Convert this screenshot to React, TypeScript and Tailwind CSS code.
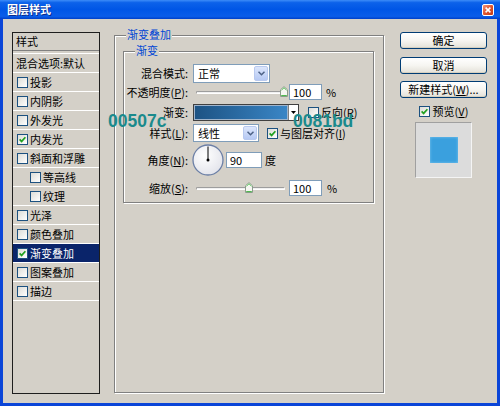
import React from "react";

function Check({ checked }: { checked?: boolean }) {
  return (
    <span className="inline-flex w-[11px] h-[11px] shrink-0 items-center justify-center border border-[#1c5180] bg-linear-to-br from-[#dcdcd7] to-white">
      {checked && (
        <svg width="7" height="7" viewBox="0 0 7 7">
          <path d="M0.6 3.4 L2.6 5.4 L6.4 1.2" stroke="#21a121" strokeWidth="1.7" fill="none" />
        </svg>
      )}
    </span>
  );
}

function Thumb() {
  return (
    <svg width="8" height="11" viewBox="0 0 8 11">
      <path d="M0.5 10.5 V3.8 L4 0.6 L7.5 3.8 V10.5 Z" fill="#f6f6f2" stroke="#8c9c8c" strokeWidth="1" />
      <path d="M1.5 4.2 L4 1.8 L6.5 4.2" stroke="#5fc85f" strokeWidth="1" fill="none" />
      <path d="M1.2 9.6 H6.8" stroke="#3fb23f" strokeWidth="1" />
    </svg>
  );
}

function Slider({ pos }: { pos: number }) {
  return (
    <div className="relative w-[94px] h-[12px] flex items-center">
      <div className="ml-[3px] w-[89px] h-[3px] rounded-[2px] border border-[#9d9d9d] border-b-white border-r-white bg-[#f0f0f0]" />
      <div className="absolute top-[0px]" style={{ left: pos }}>
        <Thumb />
      </div>
    </div>
  );
}

function ComboArrow() {
  return (
    <span className="ml-auto mr-[1px] w-[14px] h-[calc(100%-2px)] rounded-[2px] border border-[#b8c9ef] bg-linear-to-b from-[#dce6fb] to-[#b6c9f4] flex items-center justify-center">
      <svg width="7" height="5" viewBox="0 0 7 5">
        <path d="M0.5 0.8 L3.5 3.8 L6.5 0.8" stroke="#4d6185" strokeWidth="1.5" fill="none" />
      </svg>
    </span>
  );
}

function Combo({ w, h, text }: { w: string; h: string; text: string }) {
  return (
    <div className={`${w} ${h} flex items-center bg-white border border-[#7f9db9] pl-[4px]`}>
      <span>{text}</span>
      <ComboArrow />
    </div>
  );
}

function Input({ value, w, h }: { value: string; w: string; h: string }) {
  return (
    <div className={`${w} ${h} bg-white border border-[#7f9db9] flex items-center pl-[3px] leading-none`}>
      {value}
    </div>
  );
}

function Label({ children }: { children: React.ReactNode }) {
  return <span className="w-[64px] shrink-0 text-right whitespace-nowrap">{children}</span>;
}

function Button({ children, cls = "" }: { children: React.ReactNode; cls?: string }) {
  return (
    <div
      className={`w-[87px] h-[17px] rounded-[3px] border border-[#003c74] bg-linear-to-b from-white via-[#f6f5f1] to-[#e3e1d8] flex items-center justify-center shadow-[inset_0_-1px_0_#d6d0c0] ${cls}`}
    >
      {children}
    </div>
  );
}

const items: { t: string; c?: boolean; ind?: boolean; sel?: boolean }[] = [
  { t: "投影" },
  { t: "内阴影" },
  { t: "外发光" },
  { t: "内发光", c: true },
  { t: "斜面和浮雕" },
  { t: "等高线", ind: true },
  { t: "纹理", ind: true },
  { t: "光泽" },
  { t: "颜色叠加" },
  { t: "渐变叠加", c: true, sel: true },
  { t: "图案叠加" },
  { t: "描边" },
];

export default function App() {
  return (
    <div className="relative w-[500px] h-[406px] flex flex-col bg-[#d4d0c8] overflow-hidden text-[11px] text-black font-['Noto_Sans_CJK_SC','Noto_Sans',sans-serif] leading-none">
      {/* Title bar */}
      <div className="h-[19px] shrink-0 flex items-center pl-[7px] bg-[linear-gradient(to_bottom,#3d8cf8_0%,#0c62ea_14%,#0056e6_50%,#0a5de9_86%,#0040c9_100%)]">
        <span className="text-white font-bold text-[11px] [text-shadow:1px_1px_0_#0a2a8a]">图层样式</span>
        <div className="ml-auto mr-[6px] w-[12px] h-[12px] rounded-[2px] border border-white bg-linear-to-br from-[#f0937a] via-[#e0542c] to-[#c23a16] flex items-center justify-center">
          <svg width="6" height="6" viewBox="0 0 6 6">
            <path d="M0.6 0.6 L5.4 5.4 M5.4 0.6 L0.6 5.4" stroke="white" strokeWidth="1.5" />
          </svg>
        </div>
      </div>

      {/* Body */}
      <div className="flex-1 flex border-x-[3px] border-b-[3px] border-[#0a45d8] pl-[9px] pt-[13px]">
        {/* Left list */}
        <div className="w-[88px] h-[362px] shrink-0 border border-[#1e1e1e] flex flex-col">
          <div className="h-[17px] flex items-center pl-[3px]">样式</div>
          <div className="h-[4px] border-t border-[#808080] border-b border-b-white" />
          <div className="h-[19px] flex items-center pl-[3px] border-b border-white">混合选项:默认</div>
          {items.map((it) => (
            <div
              key={it.t}
              className={`h-[19px] flex items-center gap-[2px] border-b border-white ${it.ind ? "pl-[17px]" : "pl-[4px]"} ${
                it.sel ? "bg-[#0a246a] text-white" : ""
              }`}
            >
              <Check checked={it.c} />
              <span>{it.t}</span>
            </div>
          ))}
        </div>

        {/* Main frame */}
        <div className="relative ml-[14px] mt-[3px] w-[270px] h-[358px] shrink-0 border border-[#808080] shadow-[inset_1px_1px_0_#fff,1px_1px_0_#fff]">
          <span className="absolute left-[11px] top-[-7px] px-[1px] bg-[#d4d0c8] text-[#0046d5]">渐变叠加</span>

          {/* Inner group */}
          <div className="relative ml-[8px] mt-[15px] w-[251px] h-[152px] border border-[#808080] shadow-[inset_1px_1px_0_#fff,1px_1px_0_#fff] flex flex-col">
            <span className="absolute left-[11px] top-[-7px] px-[1px] bg-[#d4d0c8] text-[#0046d5]">渐变</span>

            {/* Row 1 */}
            <div className="mt-[12px] h-[19px] flex items-center">
              <Label>混合模式:</Label>
              <div className="ml-[5px]">
                <Combo w="w-[77px]" h="h-[19px]" text="正常" />
              </div>
            </div>

            {/* Row 2 */}
            <div className="mt-[1px] h-[16px] flex items-center">
              <Label>
                不透明度(<u>P</u>):
              </Label>
              <div className="ml-[5px]">
                <Slider pos={87} />
              </div>
              <div className="ml-[2px]">
                <Input value="100" w="w-[33px]" h="h-[16px]" />
              </div>
              <span className="ml-[4px]">%</span>
            </div>

            {/* Row 3 */}
            <div className="mt-[4px] h-[17px] flex items-center">
              <Label>渐变:</Label>
              <div className="ml-[5px] w-[106px] h-[17px] flex border border-[#404040]">
                <div className="flex-1 border border-[#9fb4cc] bg-linear-to-r from-[#1d5384] to-[#3a86c6]" />
                <div className="w-[10px] bg-white border-l border-[#808080] flex items-center justify-center">
                  <svg width="5" height="3" viewBox="0 0 5 3">
                    <path d="M0 0 H5 L2.5 3 Z" fill="#000" />
                  </svg>
                </div>
              </div>
              <div className="ml-[9px]">
                <Check />
              </div>
              <span className="ml-[2px]">
                反向(<u>R</u>)
              </span>
            </div>

            {/* Row 4 */}
            <div className="mt-[3px] h-[18px] flex items-center">
              <Label>
                样式(<u>L</u>):
              </Label>
              <div className="ml-[5px]">
                <Combo w="w-[66px]" h="h-[18px]" text="线性" />
              </div>
              <div className="ml-[8px]">
                <Check checked />
              </div>
              <span className="ml-[2px]">
                与图层对齐(<u>I</u>)
              </span>
            </div>

            {/* Row 5 */}
            <div className="mt-[2px] h-[32px] flex items-center">
              <Label>
                角度(<u>N</u>):
              </Label>
              <div className="ml-[4px]">
                <svg width="32" height="32" viewBox="0 0 32 32">
                  <defs>
                    <radialGradient id="dialg" cx="40%" cy="35%" r="70%">
                      <stop offset="0" stopColor="#ffffff" />
                      <stop offset="1" stopColor="#e2e3ea" />
                    </radialGradient>
                  </defs>
                  <circle cx="16" cy="16" r="15" fill="url(#dialg)" stroke="#6b7fa6" strokeWidth="1.3" />
                  <line x1="16" y1="16" x2="16" y2="2.5" stroke="#000" strokeWidth="1" />
                  <circle cx="16" cy="16" r="1.5" fill="#000" />
                </svg>
              </div>
              <div className="ml-[2px]">
                <Input value="90" w="w-[36px]" h="h-[16px]" />
              </div>
              <span className="ml-[3px]">度</span>
            </div>

            {/* Row 6 */}
            <div className="mt-[4px] h-[16px] flex items-center">
              <Label>
                缩放(<u>S</u>):
              </Label>
              <div className="ml-[5px]">
                <Slider pos={52} />
              </div>
              <div className="ml-[2px]">
                <Input value="100" w="w-[33px]" h="h-[16px]" />
              </div>
              <span className="ml-[5px]">%</span>
            </div>
          </div>
        </div>

        {/* Right column */}
        <div className="ml-[16px] w-[87px] shrink-0 flex flex-col items-center">
          <Button>确定</Button>
          <Button cls="mt-[8px]">取消</Button>
          <Button cls="mt-[7px]">
            新建样式(<u>W</u>)...
          </Button>
          <div className="mt-[7px] h-[13px] flex items-center gap-[3px]">
            <Check checked />
            <span>
              预览(<u>V</u>)
            </span>
          </div>
          <div className="mt-[4px] w-[57px] h-[56px] border border-[#a0a0a0] border-b-[#f4f4f4] border-r-[#f4f4f4] bg-[#dcdcdc] flex items-center justify-center">
            <div className="w-[28px] h-[26px] bg-[#3aa0de] shadow-[inset_0_0_3px_#7cc6f0]" />
          </div>
        </div>
      </div>

      {/* Annotations */}
      <span className="absolute left-[108px] top-[112px] font-['Liberation_Sans',sans-serif] font-bold text-[17.5px] leading-[18px] text-[#1a8a8c]">
        00507c
      </span>
      <span className="absolute left-[293px] top-[112px] font-['Liberation_Sans',sans-serif] font-bold text-[17.5px] leading-[18px] text-[#1a8a8c]">
        0081bd
      </span>
    </div>
  );
}
